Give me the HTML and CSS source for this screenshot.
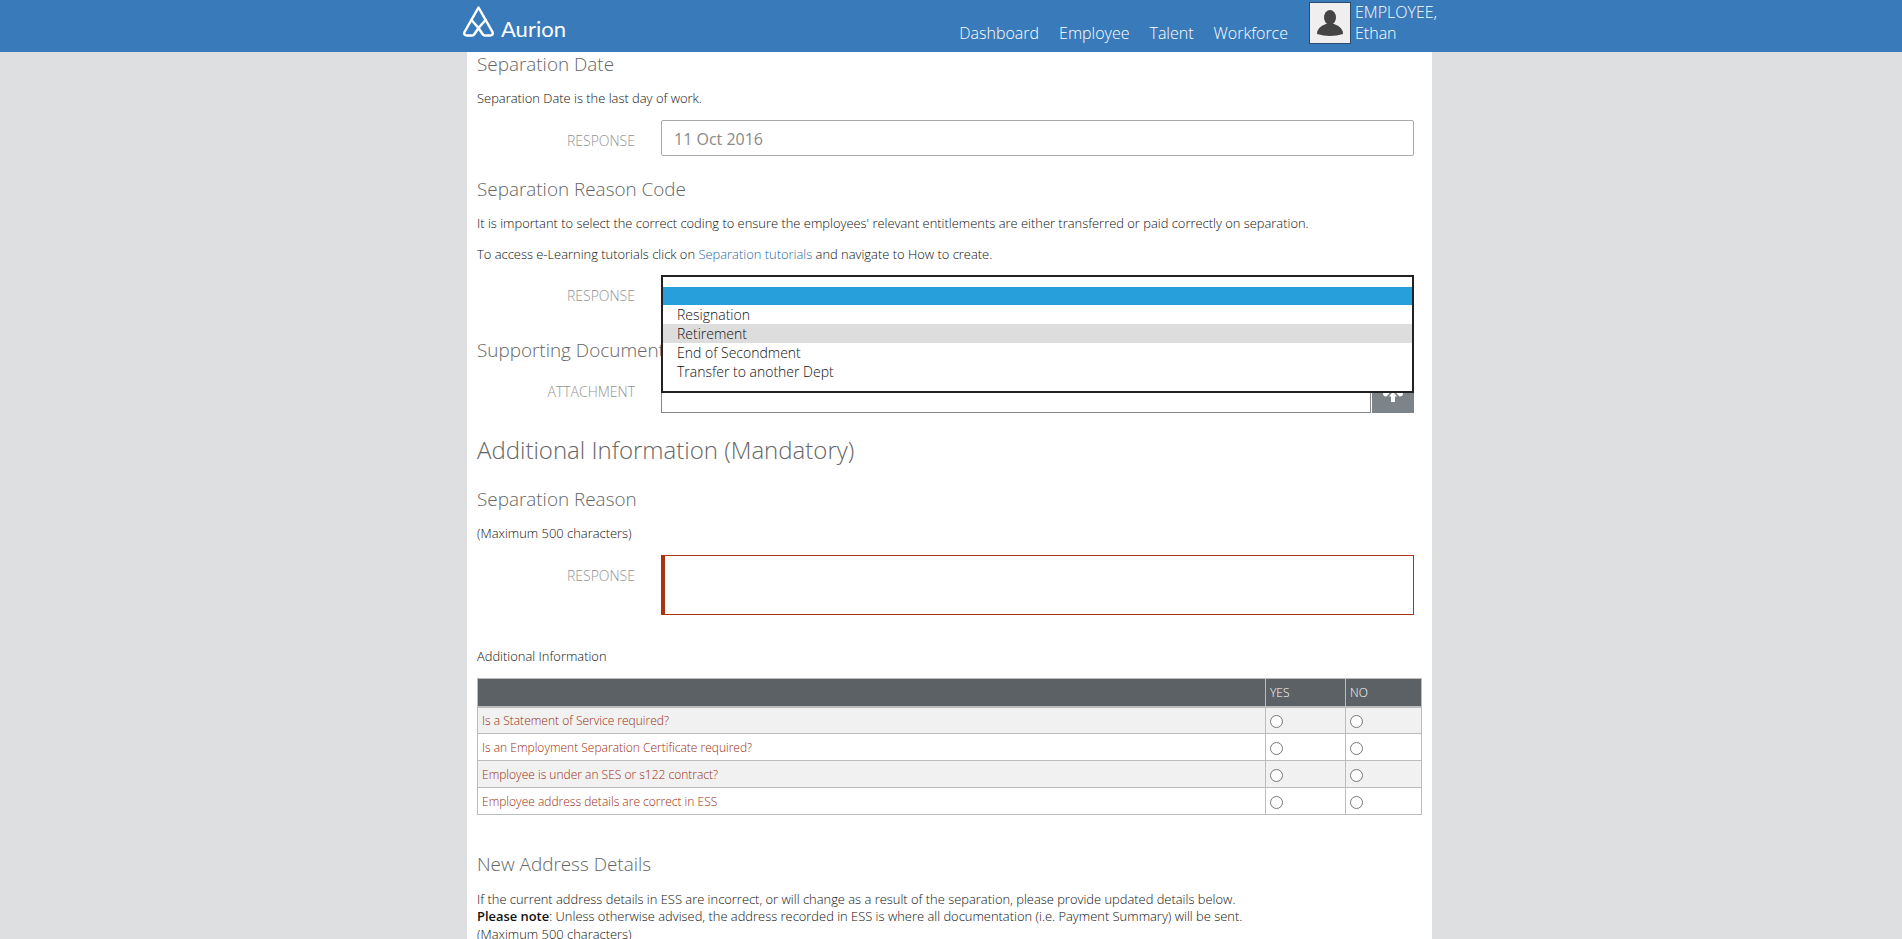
FILE: index.html
```html
<!DOCTYPE html>
<html lang="en">
<head>
<meta charset="utf-8">
<title>Separation</title>
<link rel="stylesheet" href="styles.css">
</head>
<body>
<header class="topbar">
  <div class="topbar-inner">
    <a class="logo" href="#">
      <svg class="logo-mark" viewBox="0 0 31 31" width="31" height="31" fill="none" stroke="#fff" stroke-width="2.5" stroke-linejoin="round" stroke-linecap="round">
        <path d="M15.5 1.5 L29.5 26 Q30.5 29.5 27 29.5 H22 Q20.5 29.5 19.5 28 L15.5 22 L11.5 28 Q10.5 29.5 9 29.5 H4 Q.5 29.5 1.5 26 Z"/>
        <path d="M8.5 14 L15.5 22 L22.5 14"/>
      </svg>
      <span class="logo-text">Aurion</span>
    </a>
    <nav class="nav">
      <a href="#">Dashboard</a>
      <a href="#">Employee</a>
      <a href="#">Talent</a>
      <a href="#">Workforce</a>
    </nav>
    <div class="user">
      <div class="avatar">
        <svg viewBox="0 0 40 40" width="40" height="40" fill="#444">
          <ellipse cx="20" cy="14.5" rx="6" ry="7.5"/>
          <path d="M7 31 Q7 24 16 21 L24 21 Q33 24 33 31 Q20 35 7 31 Z"/>
        </svg>
      </div>
      <div class="user-name">EMPLOYEE,<br>Ethan</div>
    </div>
  </div>
</header>

<main class="page">
  <h3 class="h-sub">Separation Date</h3>
  <p class="text t-date">Separation Date is the last day of work.</p>
  <div class="field date-field">
    <label class="label">RESPONSE</label>
    <div class="input">11 Oct 2016</div>
  </div>

  <h3 class="h-sub code">Separation Reason Code</h3>
  <p class="text t-code">It is important to select the correct coding to ensure the employees' relevant entitlements are either transferred or paid correctly on separation.</p>
  <p class="text t-tut">To access e-Learning tutorials click on <a href="#">Separation tutorials</a> and navigate to How to create.</p>
  <div class="field select-field">
    <label class="label">RESPONSE</label>
    <div class="select-box">
      <ul class="dropdown">
        <li class="opt selected"></li>
        <li class="opt">Resignation</li>
        <li class="opt hover">Retirement</li>
        <li class="opt">End of Secondment</li>
        <li class="opt">Transfer to another Dept</li>
      </ul>
    </div>
  </div>

  <h3 class="h-sub docs">Supporting Documents</h3>
  <div class="field attach">
    <label class="label">ATTACHMENT</label>
    <div class="file">
      <div class="file-input"></div>
      <button class="upload" type="button" aria-label="Upload">
        <svg viewBox="0 0 24 24" width="24" height="24" fill="#fff">
          <path d="M2 5 H22 V10 Q22 13.5 19 13.5 H18.5 L12 6.5 L5.5 13.5 H5 Q2 13.5 2 10 Z"/>
          <path d="M12 8.5 L16 13.5 H14 V19 H10 V13.5 H8 Z"/>
        </svg>
      </button>
    </div>
  </div>

  <h2 class="h-main">Additional Information (Mandatory)</h2>
  <h3 class="h-sub reason">Separation Reason</h3>
  <p class="text t-max">(Maximum 500 characters)</p>
  <div class="field area-field">
    <label class="label">RESPONSE</label>
    <div class="textarea"></div>
  </div>

  <p class="text t-add">Additional Information</p>
  <table class="grid">
    <thead>
      <tr><th></th><th class="c-yes">YES</th><th class="c-no">NO</th></tr>
    </thead>
    <tbody>
      <tr><td class="q">Is a Statement of Service required?</td><td><span class="radio"></span></td><td><span class="radio"></span></td></tr>
      <tr><td class="q">Is an Employment Separation Certificate required?</td><td><span class="radio"></span></td><td><span class="radio"></span></td></tr>
      <tr><td class="q">Employee is under an SES or s122 contract?</td><td><span class="radio"></span></td><td><span class="radio"></span></td></tr>
      <tr><td class="q">Employee address details are correct in ESS</td><td><span class="radio"></span></td><td><span class="radio"></span></td></tr>
    </tbody>
  </table>

  <h3 class="h-sub addr">New Address Details</h3>
  <p class="text t-addr">If the current address details in ESS are incorrect, or will change as a result of the separation, please provide updated details below.<br><b>Please note</b>: Unless otherwise advised, the address recorded in ESS is where all documentation (i.e. Payment Summary) will be sent.<br>(Maximum 500 characters)</p>
</main>
</body>
</html>
```
FILE: styles.css
```css
* { box-sizing: border-box; }
html, body { margin: 0; height: 939px; overflow: hidden; }
body { background: #dddfe1; font-family: "Open Sans", "Liberation Sans", sans-serif; color: #333; font-weight: 300; }
.topbar { height: 52px; background: #387aba; }
.topbar-inner { width: 974px; margin-left: 463px; height: 52px; display: flex; align-items: flex-start; }
.logo { display: flex; align-items: flex-end; color: #fff; text-decoration: none; height: 31px; margin-top: 6px; }
.logo-mark { display: block; }
.logo-text { font-family: "Lato", sans-serif; font-size: 22px; line-height: 22px; font-weight: 400; margin-left: 7px; margin-bottom: -3px; }
.nav { display: flex; gap: 20px; margin-left: auto; margin-top: 22px; }
.nav a { color: #fff; text-decoration: none; font-size: 16px; line-height: 22px; font-weight: 300; }
.user { display: flex; margin-left: 21px; margin-top: 2px; }
.avatar { width: 42px; height: 42px; background: #f0eeef; border: 1px solid #2c4c6c; overflow: hidden; }
.avatar svg { display: block; }
.user-name { color: #fff; font-size: 16px; line-height: 21px; font-weight: 300; margin-left: 4px; }

.page { width: 965px; height: 887px; margin-left: 467px; background: #fff; padding: 0 10px; overflow: hidden; }
.h-sub { margin: 0; font-size: 18.9px; line-height: 24px; font-weight: 300; color: #666; }
.h-main { margin: 21px 0 0; font-size: 24px; line-height: 32px; font-weight: 300; color: #666; }
.text { margin: 0; font-size: 12.92px; line-height: 19px; color: #111; font-weight: 300; }
.text b { font-weight: 600; }
.text a { color: #2a6aa6; text-decoration: none; font-weight: 300; }
.t-date { margin-top: 13px; }
.field { display: flex; align-items: flex-start; }
.label { width: 158px; flex: none; text-align: right; font-size: 14px; line-height: 20px; color: #939393; font-weight: 300; }
.date-field { margin-top: 12px; }
.date-field .label { margin-top: 11px; }
.input { margin-left: 26px; width: 753px; height: 36px; border: 1px solid #aaa; border-radius: 2px; padding: 0 12px; font-size: 16px; line-height: 36px; color: #8a8a8a; font-weight: 400; }
.code { margin-top: 21px; }
.t-code { margin-top: 13px; }
.t-tut { margin-top: 12px; }
.select-field { margin-top: 11px; height: 36px; }
.select-field .label { margin-top: 11px; }
.select-box { margin-left: 26px; width: 753px; position: relative; height: 36px; }
.dropdown { position: absolute; top: 0; left: 0; width: 753px; height: 118px; margin: 0; padding: 10px 0 0; list-style: none; background: #fff; border: 2px solid #222; z-index: 2; }
.opt { height: 19px; padding-left: 14px; font-size: 14px; line-height: 19px; color: #111; font-weight: 300; }
.opt.selected { height: 18px; background: #269fda; }
.opt.hover { background: #dddddd; }
.docs { margin-top: 27px; padding-bottom: 1px; }
.attach { margin-top: 14px; }
.attach .label { margin-top: 5px; }
.file { margin-left: 26px; width: 753px; height: 36px; display: flex; }
.file-input { width: 710px; height: 36px; border: 1px solid #888; }
.upload { width: 42px; margin-left: 1px; height: 36px; background: #7d8489; border: 0; padding: 0; display: flex; align-items: center; justify-content: center; }
.reason { margin-top: 21px; }
.t-max { margin-top: 13px; }
.area-field { margin-top: 12px; }
.area-field .label { margin-top: 11px; }
.textarea { margin-left: 26px; width: 753px; height: 60px; border: 1px solid #a93412; border-left-width: 4px; }
.t-add { margin-top: 32px; }
.grid { margin-top: 12px; width: 945px; border-collapse: collapse; table-layout: fixed; font-size: 12px; color: #9c2c0c; }
.grid th, .grid td { border: 1px solid #bcbcbc; padding: 0 4px; text-align: left; font-weight: 300; }
.grid th { height: 28px; background: #5c6165; color: #fff; font-size: 12px; border-bottom-width: 2px; }
.c-yes { width: 80px; }
.c-no { width: 76px; }
.grid td { height: 27px; vertical-align: middle; }
.grid tbody tr:nth-child(odd) { background: #f1f1f1; }
.radio { display: block; width: 13px; height: 13px; margin-top: 2px; border: 1px solid #777; border-radius: 50%; background: #fff; }
.addr { margin-top: 37px; }
.t-addr { margin-top: 15px; line-height: 17.3px; }
```
